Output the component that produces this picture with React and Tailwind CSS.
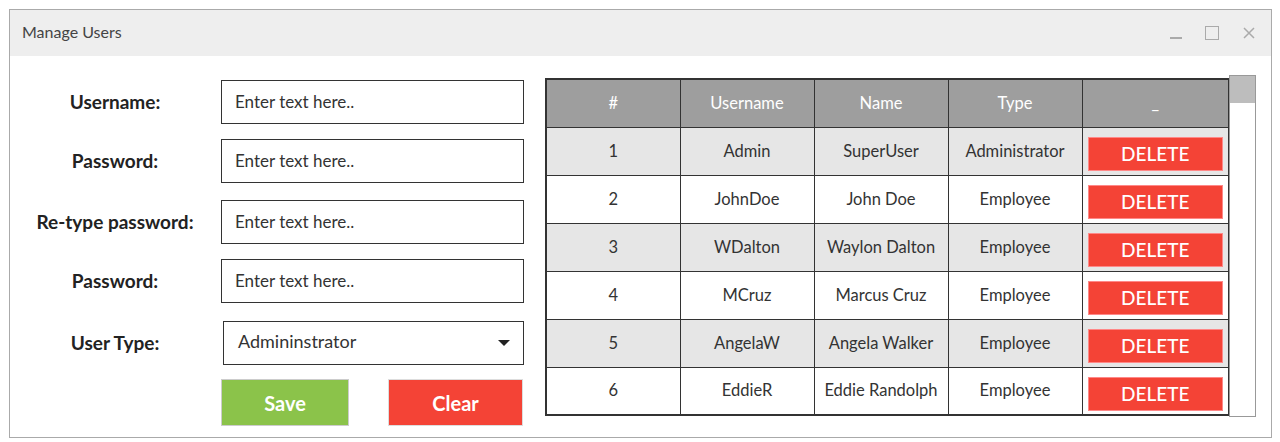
import React from 'react'

const users = [
  { id: 1, username: 'Admin', name: 'SuperUser', type: 'Administrator' },
  { id: 2, username: 'JohnDoe', name: 'John Doe', type: 'Employee' },
  { id: 3, username: 'WDalton', name: 'Waylon Dalton', type: 'Employee' },
  { id: 4, username: 'MCruz', name: 'Marcus Cruz', type: 'Employee' },
  { id: 5, username: 'AngelaW', name: 'Angela Walker', type: 'Employee' },
  { id: 6, username: 'EddieR', name: 'Eddie Randolph', type: 'Employee' },
]

function Field({ label, mt, children }) {
  return (
    <div className={`flex items-center ${mt}`}>
      <div className="w-[190px] ml-[10px] mr-[11px] text-center text-[19px] font-bold text-[#222]">{label}</div>
      {children}
    </div>
  )
}

function TextBox() {
  return (
    <div className="w-[303px] h-[44px] border-[1.5px] border-[#333] bg-white flex items-center px-[13px] text-[17px] text-[#333]">
      Enter text here..
    </div>
  )
}

export default function App() {
  return (
    <div className="w-[1280px] h-[442px] bg-white pt-[9px] pl-[9px]" style={{ fontFamily: 'Lato, "Open Sans", sans-serif' }}>
      <div className="w-[1263px] h-[429px] border border-[#aaa] flex flex-col">
        {/* Title bar */}
        <div className="h-[46px] bg-[#eeeeee] flex items-center justify-between pl-[12px] pr-[15px]">
          <span className="text-[16px] text-[#444] -mt-[2px]">Manage Users</span>
          <div className="flex items-center gap-[23px]">
            <div className="w-[12px] h-[1.5px] bg-[#aaa] mt-[10px]" />
            <div className="w-[14px] h-[14px] border-[1.5px] border-[#aaa]" />
            <svg width="14" height="14" viewBox="0 0 14 14" stroke="#aaa" strokeWidth="1.5">
              <path d="M2 2 L12 12 M12 2 L2 12" />
            </svg>
          </div>
        </div>

        {/* Body */}
        <div className="flex pt-[22px]">
          {/* Form */}
          <div className="flex flex-col mt-[2px]">
            <Field label="Username:" mt=""><TextBox /></Field>
            <Field label="Password:" mt="mt-[15px]"><TextBox /></Field>
            <Field label="Re-type password:" mt="mt-[17px]"><TextBox /></Field>
            <Field label="Password:" mt="mt-[15px]"><TextBox /></Field>
            <Field label="User Type:" mt="mt-[18px]">
              <div className="w-[301px] h-[44px] ml-[2px] border-[1.5px] border-[#333] bg-white flex items-center justify-between pl-[14px] pr-[13px] text-[18px] text-[#333]">
                <span className="-mt-[3px]">Admininstrator</span>
                <svg width="12" height="6" viewBox="0 0 12 6"><path d="M0 0 L12 0 L6 6 Z" fill="#222" /></svg>
              </div>
            </Field>
            <div className="flex mt-[14px] ml-[211px] gap-[39px]">
              <button className="w-[128px] h-[47px] bg-[#8bc34a] border border-[#ccc] text-white text-[20px] font-bold">Save</button>
              <button className="w-[135px] h-[47px] bg-[#f44336] border border-[#ddd] text-white text-[20px] font-bold">Clear</button>
            </div>
          </div>

          {/* Table */}
          <div className="flex ml-[21px] items-start">
            <table className="border-collapse border-2 border-[#333] text-[16.5px] text-[#333]">
              <thead>
                <tr className="h-[48px] bg-[#9e9e9e] text-white">
                  {['#', 'Username', 'Name', 'Type', '_'].map((h, i) => (
                    <th key={i} className={`${i === 4 ? 'w-[147px]' : 'w-[134px]'} border border-[#333] font-normal`}>{h}</th>
                  ))}
                </tr>
              </thead>
              <tbody>
                {users.map((u, i) => (
                  <tr key={u.id} className={`h-[48px] ${i % 2 === 0 ? 'bg-[#e6e6e6]' : 'bg-white'}`}>
                    <td className="border border-[#333] text-center">{u.id}</td>
                    <td className="border border-[#333] text-center">{u.username}</td>
                    <td className="border border-[#333] text-center">{u.name}</td>
                    <td className="border border-[#333] text-center">{u.type}</td>
                    <td className="border border-[#333] px-[5px]">
                      <div className="h-[34px] bg-[#f44336] border border-[#f88] text-white text-[19px] font-medium flex items-center justify-center mt-[6px]">DELETE</div>
                    </td>
                  </tr>
                ))}
              </tbody>
            </table>
            {/* Scrollbar */}
            <div className="w-[27px] h-[342px] -mt-[3px] -ml-[1px] border border-[#999] bg-white">
              <div className="h-[27px] bg-[#bdbdbd]" />
            </div>
          </div>
        </div>
      </div>
    </div>
  )
}
